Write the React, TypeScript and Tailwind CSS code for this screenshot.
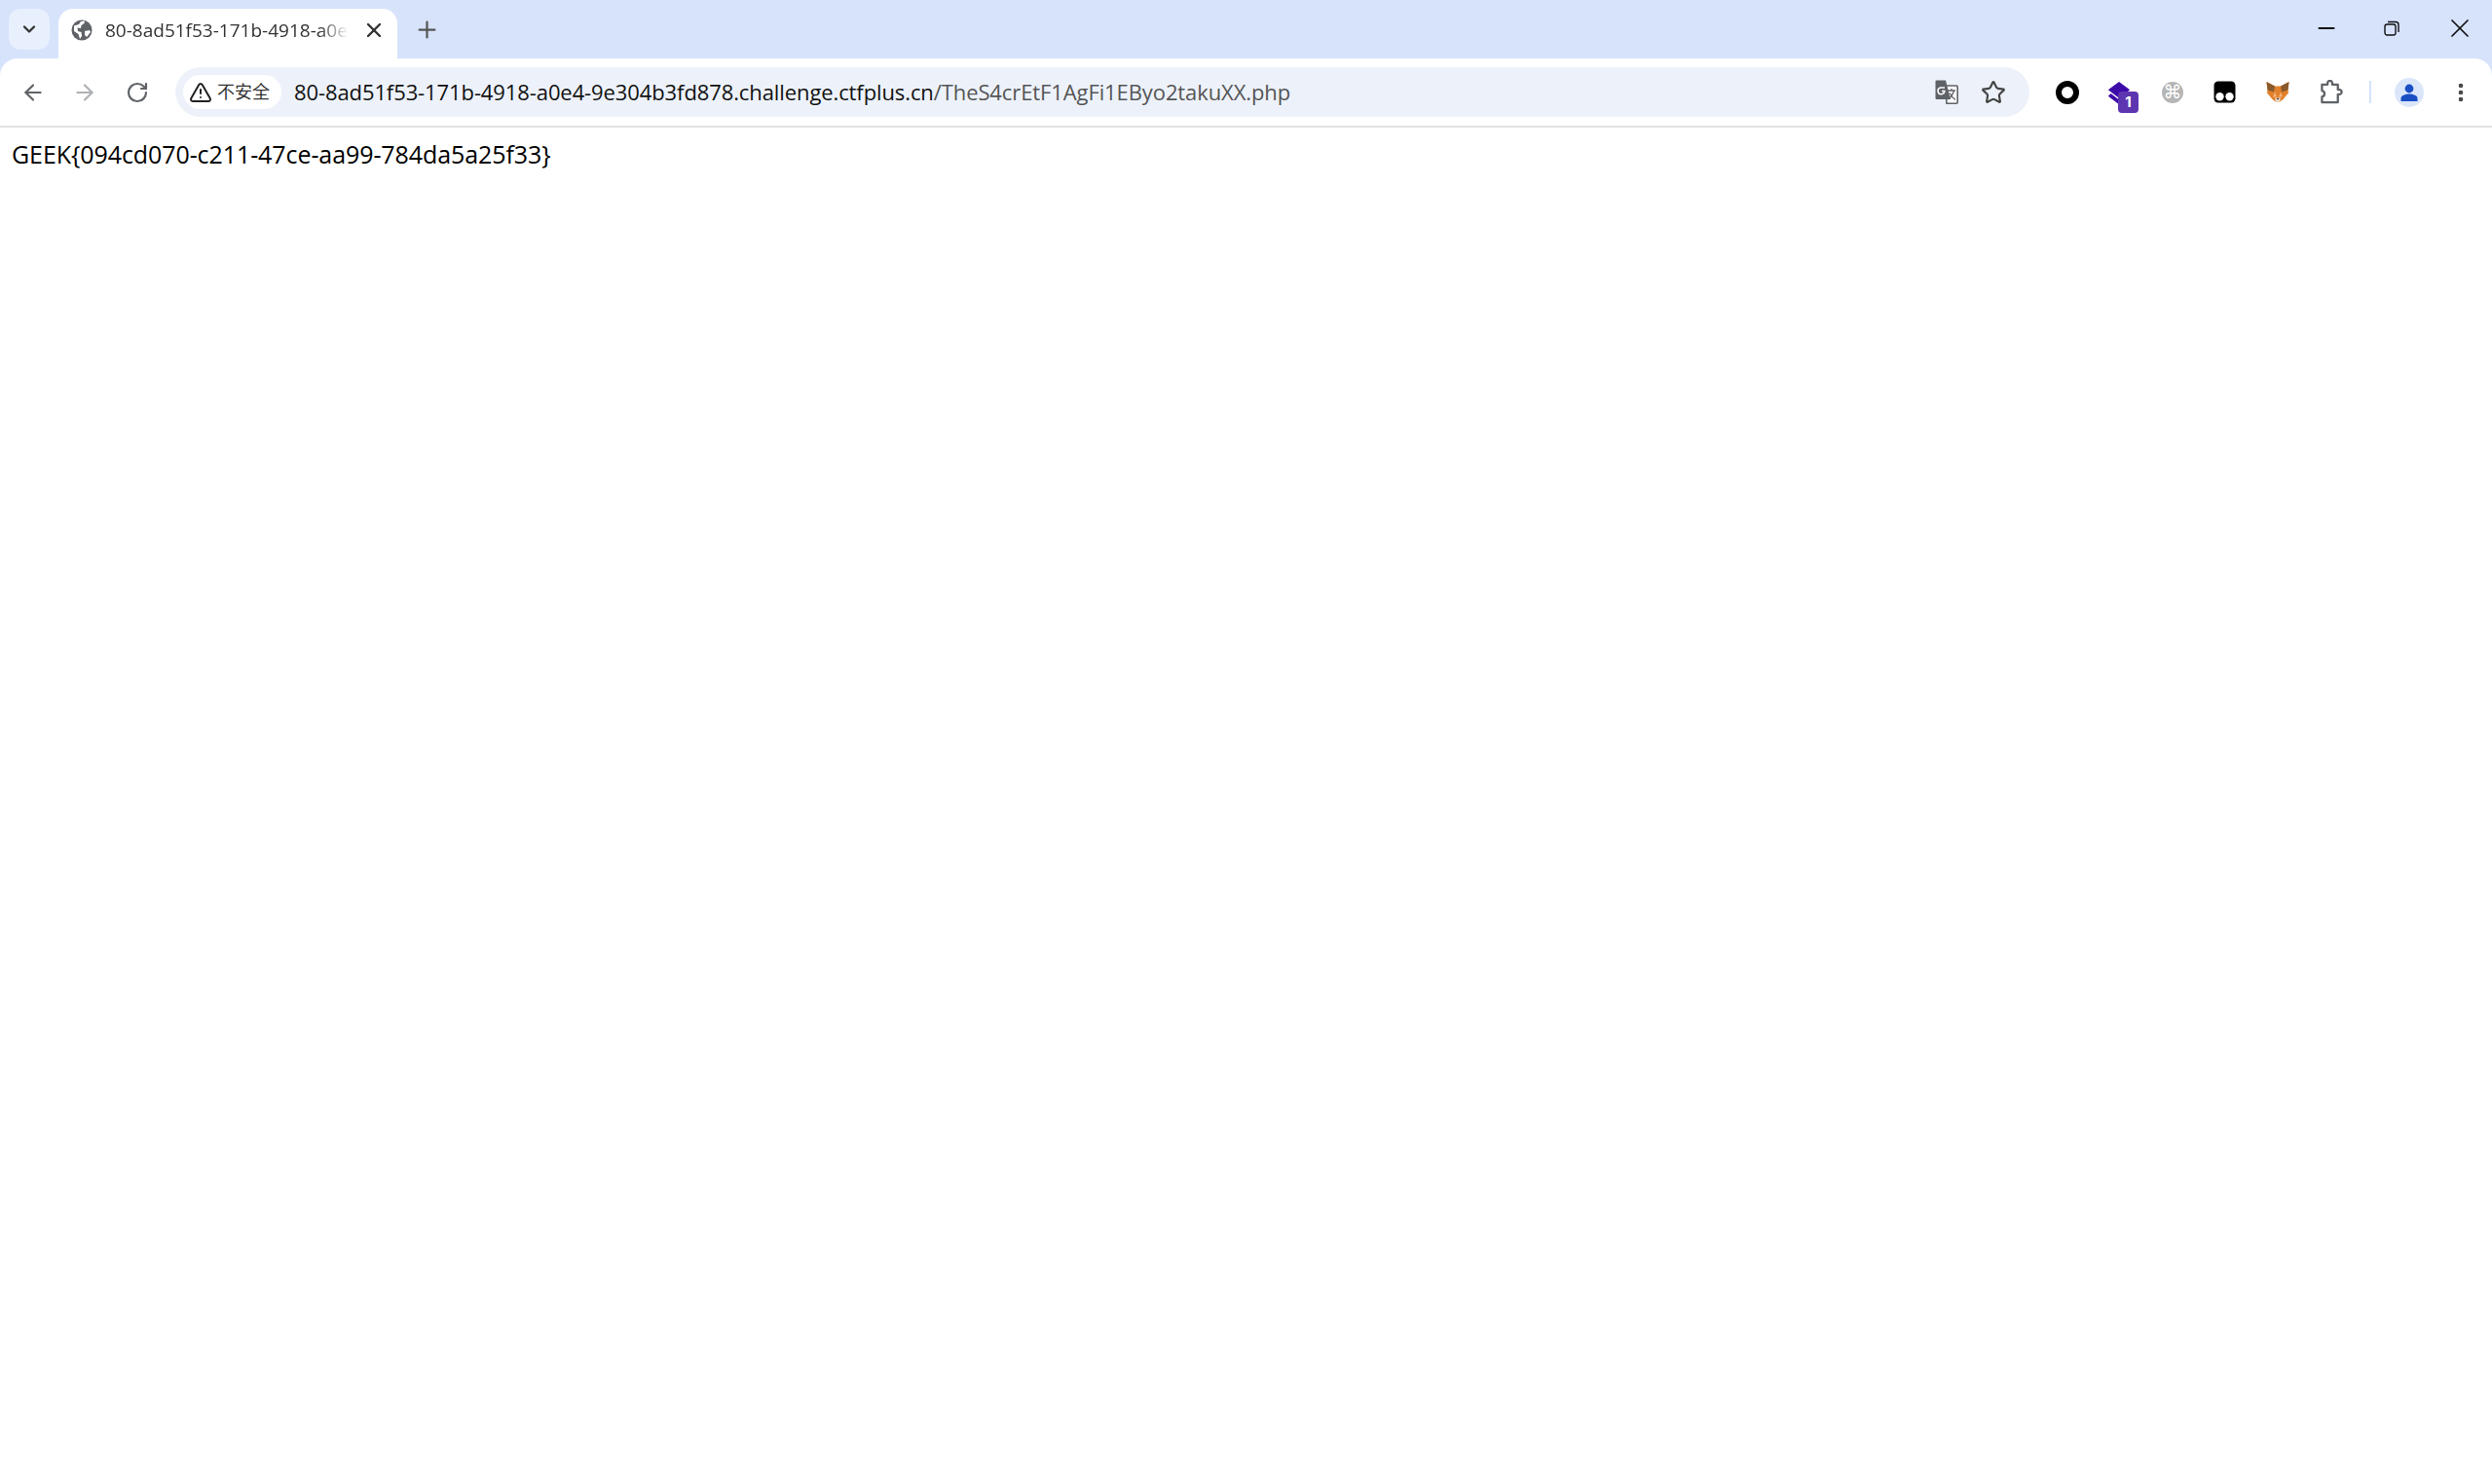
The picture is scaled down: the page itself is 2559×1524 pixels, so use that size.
import { ArrowLeft, ArrowRight, ChevronDown, EllipsisVertical, Minus, Plus, RotateCw, Star, TriangleAlert, X } from "lucide-react"

const uiFont = "font-['Open_Sans','Noto_Sans_CJK_SC',sans-serif]"

function GlobeIcon() {
    return (
        <svg width="22" height="22" viewBox="0 0 22 22" className="shrink-0">
            <circle cx="11" cy="11" r="10.5" fill="#5f6368" />
            <path d="M3 6.5 L8 5 L10 2 L14 1.5 L13.5 4 L10.5 6 L10 9 L6.5 8.5 L7 12 L10.5 13 L11 17 L9 20 L7.5 15 L3 12 Z" fill="#ffffff" />
            <path d="M14 12 L19 11 L20 13 L16 18 L14 16 Z" fill="#ffffff" />
        </svg>
    )
}

function TranslateIcon() {
    return (
        <svg width="24" height="26" viewBox="0 0 24 26">
            <path d="M11 6 H22 a1.2 1.2 0 0 1 1.2 1.2 V23 a1.2 1.2 0 0 1 -1.2 1.2 H12 Z" fill="#fff" stroke="#5f6368" strokeWidth="1.6" />
            <path d="M1.5 0.5 H11 L16 20 H1.5 A1 1 0 0 1 0.5 19 V1.5 A1 1 0 0 1 1.5 0.5 Z" fill="#5f6368" />
            <path d="M10 8 H5.5 V8 A3.4 3.4 0 1 0 9.8 11.5 H7" fill="none" stroke="#fff" strokeWidth="1.5" />
            <path d="M13 11 H21 M17 9 V11 M19.5 11 C18.5 15 16 18 13.5 20 M15 13.5 C16.5 16.5 18.5 19 21 20.5" fill="none" stroke="#5f6368" strokeWidth="1.3" />
        </svg>
    )
}

function StackExtension() {
    return (
        <div className="relative w-[33px] h-[33px]">
            <svg width="26" height="28" viewBox="0 0 28 28" className="absolute left-0 top-0">
                <path d="M14 0 L26 9 L14 18 L2 9 Z" fill="#3d0ca8" />
                <path d="M5 13 L14 20 L23 13 L26 16 L14 25 L2 16 Z" fill="#3d0ca8" />
            </svg>
            <span className="absolute left-[12px] top-[11px] w-[21px] h-[22px] rounded-[4px] bg-[#5e35b1] text-white text-[15px] leading-[22px] font-bold text-center font-['Inter',sans-serif]">
                1
            </span>
        </div>
    )
}

function CommandExtension() {
    return (
        <div className="w-[22px] h-[22px] rounded-full bg-[#b5b5b5] flex items-center justify-center text-white text-[19px] leading-none font-['DejaVu_Sans',sans-serif]">
            ⌘
        </div>
    )
}

function OwlExtension() {
    return (
        <svg width="23" height="23" viewBox="0 0 22 22">
            <rect x="0.5" y="0.5" width="21" height="21" rx="4" fill="#000" />
            <circle cx="6.2" cy="15.5" r="4" fill="#fff" />
            <circle cx="15.8" cy="15.5" r="4" fill="#fff" />
        </svg>
    )
}

function FoxExtension() {
    return (
        <svg width="24" height="23" viewBox="0 0 24 22">
            <path d="M0.5 0.5 L9 5 H15 L23.5 0.5 L22.5 9 L23 12 L17 19 L14 21 H10 L7 19 L1 12 L1.5 9 Z" fill="#e2802b" />
            <path d="M0.5 0.5 L9 5 L8 11 L1.5 9 Z M23.5 0.5 L15 5 L16 11 L22.5 9 Z" fill="#8a5a2c" />
            <path d="M9 11 L11 16 L7 16 Z M15 11 L13 16 L17 16 Z" fill="#f3b27a" />
            <path d="M9 17 H15 L14 21 H10 Z" fill="#ecdccb" />
            <path d="M10.5 17.5 H13.5 L12 19 Z" fill="#2b2b2b" />
        </svg>
    )
}

function PuzzleIcon() {
    return (
        <svg width="24" height="25" viewBox="0 0 24 26" fill="none" stroke="#5f6368" strokeWidth="2.4" strokeLinejoin="round">
            <path d="M2 5 H8 V3.5 A2.5 2.5 0 0 1 13 3.5 V5 H19 V10.5 H20.5 A2.5 2.5 0 0 1 20.5 15.5 H19 V24 H2 V18 A3.3 3.3 0 0 0 2 11.5 Z" />
        </svg>
    )
}

function ProfileIcon() {
    return (
        <div className="w-[30px] h-[30px] rounded-full bg-[#dbe6fb] flex items-center justify-center">
            <svg width="18" height="18" viewBox="0 0 18 18">
                <circle cx="9" cy="5" r="4.4" fill="#1a4fc4" />
                <path d="M0.5 18 V15 C0.5 12 5 10.5 9 10.5 C13 10.5 17.5 12 17.5 15 V18 Z" fill="#1a4fc4" />
            </svg>
        </div>
    )
}

function RestoreIcon() {
    return (
        <svg width="16" height="16" viewBox="0 0 16 16" fill="none" stroke="#111" strokeWidth="1.4">
            <rect x="1" y="4" width="11" height="11" rx="2.2" />
            <path d="M4 1.5 H12 A3 3 0 0 1 15 4.5 V12" />
        </svg>
    )
}

export default function App() {
    return (
        <div className="min-h-[1524px] bg-white flex flex-col">
            {/* Tab strip */}
            <div className="h-[60px] bg-[#d6e3fb] flex items-end pl-[9px] text-[#1f1f1f]">
                <div className="w-[42px] h-[42px] mb-[9px] rounded-[12px] bg-[#e8f0fd] flex items-center justify-center">
                    <ChevronDown size={20} strokeWidth={2.8} color="#333" />
                </div>
                <div className="ml-[9px] w-[348px] h-[51px] bg-white rounded-t-[15px] flex items-center pl-[13px] pr-[12px] pb-[7px]">
                    <GlobeIcon />
                    <span className={`ml-[13px] w-[250px] overflow-hidden whitespace-nowrap text-[19px] leading-[26px] text-[#333] ${uiFont} [mask-image:linear-gradient(to_right,black_88%,transparent)]`}>
                        80-8ad51f53-171b-4918-a0e4-9e304b3fd878
                    </span>
                    <X size={24} strokeWidth={2.4} color="#333" className="ml-auto" />
                </div>
                <div className="ml-[17px] mb-[16px] w-[27px] h-[27px] flex items-center justify-center">
                    <Plus size={27} strokeWidth={2} color="#555" />
                </div>
                <div className="ml-auto h-[60px] flex items-center pr-[17px] pb-[2px] gap-[46px]">
                    <Minus size={26} strokeWidth={1.8} color="#111" />
                    <RestoreIcon />
                    <X size={32} strokeWidth={1.3} color="#111" />
                </div>
            </div>

            {/* Toolbar */}
            <div className="bg-[#d6e3fb]">
                <div className="h-[71px] bg-white rounded-t-[18px] border-b-2 border-[#e2e2e2] flex items-center pl-[21px]">
                    <ArrowLeft size={26} strokeWidth={2} color="#5f6368" />
                    <ArrowRight size={26} strokeWidth={2} color="#aeb0b3" className="ml-[27px]" />
                    <RotateCw size={24} strokeWidth={2.2} color="#5f6368" className="ml-[29px]" />
                    <div className="ml-[27px] w-[1904px] h-[51px] rounded-full bg-[#edf2fa] flex items-center pl-[8px] pr-[24px]">
                        <div className="h-[35px] w-[101px] rounded-full bg-white flex items-center pl-[6px]">
                            <TriangleAlert size={24} strokeWidth={2} color="#222" />
                            <span className={`ml-[5px] text-[18px] text-[#333] ${uiFont}`}>不安全</span>
                        </div>
                        <span className={`ml-[13px] text-[22px] tracking-[-0.1px] whitespace-nowrap text-[#111] ${uiFont}`}>
                            80-8ad51f53-171b-4918-a0e4-9e304b3fd878.challenge.ctfplus.cn
                            <span className="text-[#555]">/TheS4crEtF1AgFi1EByo2takuXX.php</span>
                        </span>
                        <div className="ml-auto flex items-center gap-[23px]">
                            <TranslateIcon />
                            <Star size={26} strokeWidth={2} color="#444" />
                        </div>
                    </div>
                    <div className="flex-1 flex items-center pl-[27px] pr-[20px]">
                        <div className="w-[24px] h-[24px] rounded-full border-[6px] border-black" />
                        <div className="ml-[28px] mt-[10px]"><StackExtension /></div>
                        <div className="ml-[24px]"><CommandExtension /></div>
                        <div className="ml-[31px]"><OwlExtension /></div>
                        <div className="ml-[31px]"><FoxExtension /></div>
                        <div className="ml-[31px]"><PuzzleIcon /></div>
                        <div className="ml-[27px] w-[2px] h-[23px] bg-[#d3e3fd]" />
                        <div className="ml-[24px]"><ProfileIcon /></div>
                        <EllipsisVertical size={24} strokeWidth={2.6} color="#444" className="ml-auto" />
                    </div>
                </div>
            </div>

            {/* Page */}
            <div className="px-[12px] pt-[10px] text-[25px] tracking-[-0.08px] leading-[34px] text-black font-['Open_Sans',sans-serif]">
                GEEK&#123;094cd070-c211-47ce-aa99-784da5a25f33&#125;
            </div>
        </div>
    )
}
